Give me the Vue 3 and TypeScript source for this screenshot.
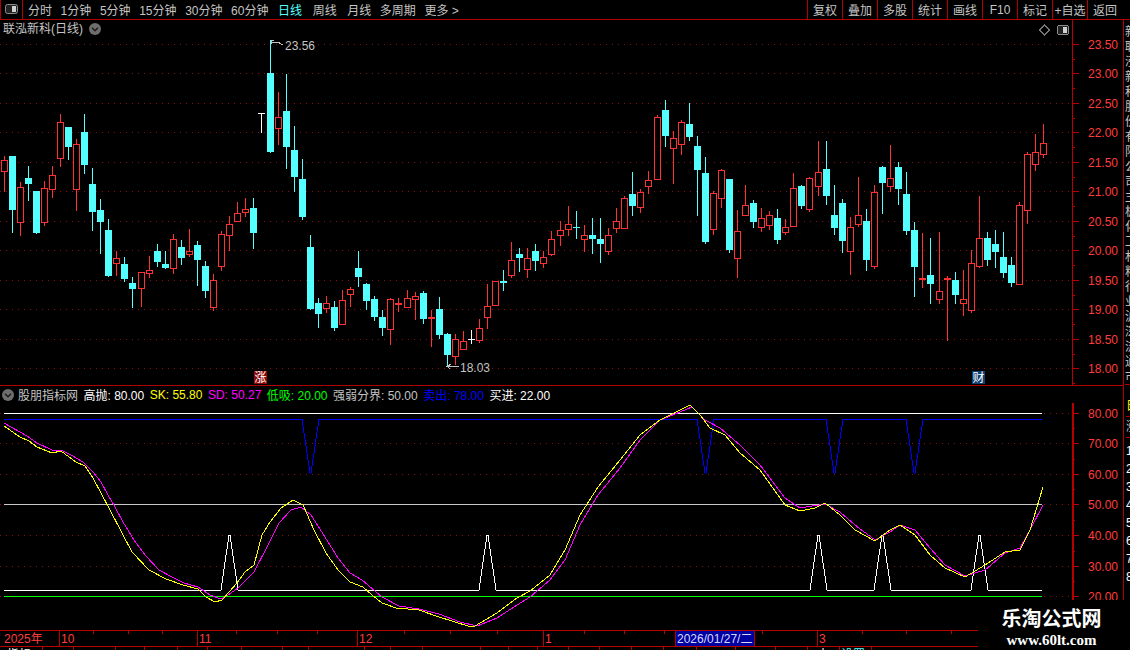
<script setup lang="ts">
// one candle: [x, wick top, body top, body bottom, wick bottom, colour]
type Candle = [number, number, number, number, number, 'r' | 'c' | 'w']

const candles: Candle[] = [
  [4, 156, 160, 171, 191, 'r'], [12, 156, 156, 210, 232, 'c'], [20, 182, 187, 222, 235, 'r'], [28, 166, 178, 184, 200, 'c'],
  [36, 191, 191, 233, 233, 'c'], [44, 181, 188, 222, 225, 'r'], [52, 166, 175, 189, 197, 'r'], [60, 114, 122, 158, 166, 'r'],
  [68, 127, 127, 147, 159, 'c'], [76, 139, 144, 189, 210, 'r'], [84, 114, 132, 165, 173, 'c'], [92, 168, 184, 212, 230, 'c'],
  [100, 199, 210, 222, 253, 'c'], [108, 219, 230, 276, 276, 'c'], [116, 251, 258, 263, 275, 'r'], [124, 257, 264, 279, 281, 'c'],
  [132, 277, 283, 289, 307, 'c'], [141, 272, 272, 288, 306, 'r'], [149, 256, 270, 273, 277, 'r'], [157, 244, 251, 262, 266, 'c'],
  [165, 251, 264, 268, 268, 'c'], [173, 234, 239, 268, 273, 'r'], [181, 240, 247, 258, 264, 'c'], [189, 229, 251, 254, 256, 'r'],
  [197, 241, 245, 260, 285, 'c'], [205, 261, 266, 291, 297, 'c'], [213, 274, 280, 307, 310, 'r'], [221, 231, 234, 266, 270, 'r'],
  [229, 216, 224, 235, 250, 'r'], [237, 202, 213, 221, 221, 'r'], [245, 198, 209, 212, 216, 'r'], [253, 198, 208, 233, 248, 'c'],
  [261, 113, 113, 114, 132, 'w'], [270, 40, 73, 152, 152, 'c'], [278, 92, 117, 128, 144, 'r'], [286, 74, 111, 147, 168, 'c'],
  [294, 126, 150, 177, 191, 'c'], [302, 159, 179, 217, 219, 'c'], [310, 235, 247, 309, 309, 'c'], [318, 298, 303, 314, 327, 'c'],
  [326, 296, 303, 308, 312, 'r'], [334, 301, 307, 328, 330, 'c'], [342, 290, 300, 324, 324, 'r'], [350, 287, 289, 294, 306, 'r'],
  [358, 251, 268, 277, 286, 'c'], [366, 283, 284, 301, 309, 'c'], [374, 296, 299, 317, 320, 'c'], [382, 310, 317, 328, 335, 'c'],
  [390, 298, 299, 329, 344, 'r'], [398, 298, 303, 305, 311, 'r'], [407, 290, 298, 307, 307, 'r'], [415, 292, 296, 299, 319, 'r'],
  [423, 291, 293, 319, 323, 'c'], [431, 310, 317, 319, 346, 'r'], [439, 297, 309, 335, 338, 'c'], [447, 333, 334, 355, 365, 'c'],
  [455, 334, 339, 356, 364, 'r'], [463, 331, 341, 349, 349, 'r'], [471, 330, 339, 340, 343, 'w'], [479, 319, 328, 340, 342, 'r'],
  [487, 284, 306, 317, 328, 'r'], [495, 281, 281, 305, 305, 'r'], [503, 270, 281, 283, 290, 'c'], [511, 242, 260, 275, 277, 'r'],
  [519, 248, 254, 258, 271, 'c'], [527, 248, 258, 269, 277, 'r'], [535, 244, 251, 261, 270, 'c'], [543, 251, 257, 263, 267, 'r'],
  [551, 231, 239, 254, 255, 'r'], [560, 221, 230, 235, 245, 'r'], [568, 206, 224, 229, 235, 'r'], [576, 211, 227, 228, 238, 'c'],
  [584, 225, 235, 239, 251, 'r'], [592, 218, 235, 239, 253, 'c'], [600, 218, 239, 244, 262, 'c'], [608, 228, 235, 251, 254, 'r'],
  [616, 208, 221, 228, 232, 'r'], [624, 196, 198, 228, 228, 'r'], [632, 172, 194, 206, 215, 'c'], [640, 189, 192, 207, 212, 'r'],
  [648, 171, 180, 186, 193, 'r'], [657, 115, 117, 179, 179, 'r'], [665, 100, 110, 136, 146, 'c'], [673, 131, 138, 148, 183, 'r'],
  [681, 120, 122, 144, 154, 'r'], [689, 103, 124, 137, 140, 'c'], [697, 136, 146, 170, 215, 'c'], [705, 157, 173, 242, 243, 'c'],
  [713, 191, 193, 229, 234, 'r'], [721, 169, 170, 198, 207, 'r'], [729, 179, 179, 250, 252, 'c'], [737, 210, 231, 258, 277, 'r'],
  [745, 185, 205, 215, 215, 'r'], [753, 200, 203, 222, 227, 'c'], [761, 208, 218, 227, 231, 'r'], [769, 211, 215, 225, 229, 'r'],
  [777, 209, 218, 240, 243, 'c'], [785, 219, 227, 232, 234, 'r'], [793, 173, 188, 226, 226, 'r'], [801, 185, 186, 206, 208, 'c'],
  [809, 177, 178, 209, 211, 'r'], [818, 141, 172, 186, 195, 'r'], [826, 141, 169, 196, 204, 'c'], [834, 185, 215, 228, 234, 'c'],
  [842, 199, 203, 241, 252, 'c'], [850, 217, 227, 251, 274, 'r'], [858, 177, 215, 224, 226, 'r'], [866, 209, 221, 260, 270, 'c'],
  [874, 185, 192, 266, 268, 'r'], [882, 166, 167, 183, 213, 'c'], [890, 145, 178, 186, 191, 'r'], [898, 162, 167, 189, 204, 'c'],
  [906, 172, 194, 231, 234, 'c'], [914, 222, 230, 267, 296, 'c'], [922, 233, 278, 280, 287, 'r'], [930, 238, 275, 284, 303, 'c'],
  [939, 232, 291, 299, 303, 'r'], [947, 276, 278, 280, 340, 'r'], [955, 272, 280, 295, 303, 'c'], [963, 270, 299, 303, 315, 'r'],
  [971, 250, 263, 310, 312, 'r'], [979, 196, 238, 266, 267, 'r'], [987, 232, 238, 260, 265, 'c'], [995, 230, 244, 252, 267, 'c'],
  [1003, 232, 257, 273, 277, 'c'], [1011, 257, 265, 283, 286, 'c'], [1019, 202, 205, 284, 284, 'r'], [1027, 152, 154, 210, 223, 'r'],
  [1035, 134, 152, 164, 170, 'r'], [1043, 124, 143, 154, 157, 'r']
]

const navItems = ['分时', '1分钟', '5分钟', '15分钟', '30分钟', '60分钟', '日线', '周线', '月线', '多周期', '更多 >']
const tools = ['复权', '叠加', '多股', '统计', '画线', 'F10', '标记', '+自选', '返回']

const legend = [
  { label: '高抛: 80.00', tone: 'white' },
  { label: 'SK: 55.80', tone: 'yellow' },
  { label: 'SD: 50.27', tone: 'magenta' },
  { label: '低吸: 20.00', tone: 'green' },
  { label: '强弱分界: 50.00', tone: 'grey' },
  { label: '卖出: 78.00', tone: 'blue' },
  { label: '买进: 22.00', tone: 'white' }
]

const priceTicks = [
  [44, '23.50'], [73, '23.00'], [103, '22.50'], [132, '22.00'], [162, '21.50'], [191, '21.00'],
  [221, '20.50'], [250, '20.00'], [280, '19.50'], [309, '19.00'], [339, '18.50'], [368, '18.00']
] as [number, string][]

const indicatorTicks = [
  [413, '80.00'], [443, '70.00'], [474, '60.00'], [504, '50.00'], [535, '40.00'], [566, '30.00'], [596, '20.00']
] as [number, string][]

const skLine = '4,426 20,437 29,441 37,447 52,453 61,451 69,457 76,462 85,466 93,478 101,493 110,510 122,533 132,552 149,570 166,579 183,585 198,589 206,597 215,602 222,600 237,583 245,572 254,565 262,535 270,522 281,508 293,500 303,505 314,530 326,553 338,570 350,582 363,587 372,595 382,603 396,608 419,610 439,617 468,626 475,626 497,613 517,598 530,591 550,575 565,550 580,515 598,487 620,460 640,435 660,420 680,410 690,405 700,415 710,428 725,435 740,453 760,470 785,505 800,511 815,508 825,503 840,515 855,530 875,541 890,530 900,525 915,535 930,555 945,568 965,577 985,565 1005,552 1020,550 1030,530 1043,487'
const sdLine = '4,423 27,436 37,443 52,450 63,451 71,455 83,462 93,472 101,482 108,495 115,507 123,522 134,540 145,555 159,570 172,577 184,583 198,587 210,595 221,599 228,595 238,588 254,572 267,547 279,523 291,510 301,507 311,515 325,537 338,558 350,573 362,580 382,597 399,606 419,609 439,614 460,622 477,626 497,618 514,607 530,597 550,580 565,560 580,525 598,495 620,468 640,440 660,420 680,412 692,407 705,420 720,428 740,445 760,465 785,498 800,508 825,504 840,512 855,525 875,540 890,532 900,525 915,530 930,548 945,565 965,576 985,570 1005,553 1020,548 1030,530 1043,505'

// the buy line jumps to 40 and the sell line drops to 60 on these bars
const buyAt = [229, 487, 818, 882, 979]
const sellAt = [310, 705, 834, 914]

function pulseLine(level: number, peak: number, at: number[]) {
  const pts = [`4,${level}`]
  at.forEach((x) => {
    pts.push(`${x - 8},${level}`, `${x},${peak}`, `${x + 1},${peak}`, `${x + 9},${level}`)
  })
  pts.push(`1042,${level}`)
  return pts.join(' ')
}

const buyLine = pulseLine(590, 535, buyAt)
const sellLine = pulseLine(419, 473, sellAt)

const monthMarks = [
  { x: 59, label: '10' }, { x: 197, label: '11' }, { x: 357, label: '12' }, { x: 543, label: '1' }, { x: 817, label: '3' }
]
const axisTicks = [93, 128, 162, 236, 277, 317, 404, 450, 497, 584, 624, 664, 762, 862, 906, 951]
const statusCuts = [42, 73, 115, 144, 177, 207, 241, 282, 308, 364, 390, 422, 480, 508, 537, 568, 599, 631, 663, 696, 735, 775, 807, 839, 871]

const sideNames = ['新', '联', '泓', '新', '科', '股', '份', '有', '限', '公', '司', '主', '板', '化', '工', '材', '料', '行', '业', '沪', '深', '流', '通', '市', '值']
const sideRows = ['1', '2', '3', '4', '5', '6', '7', '8']
</script>

<template>
  <div class="screen">
    <header class="toolbar">
      <div class="layout-toggle">
        <svg width="14" height="11" viewBox="0 0 14 11">
          <rect x="0.5" y="0.5" width="12" height="9" rx="2" fill="#222" stroke="#8c8c8c" />
          <rect x="7" y="2" width="4" height="6" fill="#d0d0d0" />
        </svg>
      </div>
      <nav class="periods">
        <span v-for="item in navItems" :key="item" :class="{ current: item === '日线' }">{{ item }}</span>
      </nav>
      <div class="tools">
        <span v-for="tool in tools" :key="tool" class="tool">{{ tool }}</span>
      </div>
    </header>

    <div class="workspace">
      <div class="charts">
        <section class="pane price-pane">
          <div class="pane-title">
            <span>联泓新科(日线)</span>
            <svg class="drop" width="12" height="12" viewBox="0 0 12 12">
              <circle cx="6" cy="6" r="6" fill="#6e6e6e" />
              <path d="M3 4.8 L6 7.8 L9 4.8" fill="none" stroke="#1c1c1c" stroke-width="1.5" />
            </svg>
          </div>
          <svg class="plot" width="1123" height="365" viewBox="0 20 1123 365">
            <g shape-rendering="crispEdges">
              <line v-for="t in priceTicks" :key="t[1]" class="grid" x1="0" x2="1072" :y1="t[0] + 0.5" :y2="t[0] + 0.5" />
              <g v-for="c in candles" :key="c[0]" :class="['bar', c[5]]">
                <rect class="wick" :x="c[0]" :y="c[1]" width="1" :height="c[4] - c[1] + 1" />
                <rect
                  v-if="c[5] === 'r' && c[3] - c[2] > 2"
                  class="hollow"
                  :x="c[0] - 2.5"
                  :y="c[2] + 0.5"
                  width="6"
                  :height="c[3] - c[2]"
                />
                <rect v-else class="solid" :x="c[0] - 3" :y="c[2]" width="7" :height="c[3] - c[2]" />
              </g>
              <rect class="red-line" x="1072" y="20" width="1" height="365" />
              <g v-for="t in priceTicks" :key="'p' + t[1]">
                <rect class="red-line" x="1072" :y="t[0]" width="7" height="1" />
                <rect class="red-line" x="1072" :y="t[0] + 15" width="3" height="1" />
              </g>
              <path class="note-line" d="M271 44 V40 H274 M272 42 H278 L281 44 H283 M451 364 L448 366 H459 M448 367 L450 369" />
              <path d="M1044.5 25 L1049.5 30 L1044.5 35 L1039.5 30 Z" fill="none" stroke="#777" />
              <rect x="1057.5" y="25.5" width="11" height="9" rx="2" fill="#222" stroke="#8c8c8c" />
              <rect x="1063" y="27" width="4" height="6" fill="#d0d0d0" />
            </g>
            <text class="note" x="285" y="50">23.56</text>
            <text class="note" x="460" y="372">18.03</text>
            <text v-for="t in priceTicks" :key="'l' + t[1]" class="axis-label" x="1088" :y="t[0] + 5">{{ t[1] }}</text>
            <rect x="254" y="371" width="13" height="13" fill="#8c0a0a" />
            <text class="flag" x="254.5" y="382">涨</text>
            <rect x="972" y="371" width="13" height="13" fill="#0f3f70" />
            <text class="flag" x="972.5" y="382">财</text>
          </svg>
        </section>

        <section class="pane indicator-pane">
          <div class="legend">
            <svg class="drop" width="12" height="12" viewBox="0 0 12 12">
              <circle cx="6" cy="6" r="6" fill="#6e6e6e" />
              <path d="M3 4.8 L6 7.8 L9 4.8" fill="none" stroke="#1c1c1c" stroke-width="1.5" />
            </svg>
            <span class="legend-name">股朋指标网</span>
            <span v-for="item in legend" :key="item.label" :class="item.tone">{{ item.label }}</span>
          </div>
          <svg class="plot" width="1123" height="227" viewBox="0 403 1123 227">
            <g shape-rendering="crispEdges">
              <line v-for="t in indicatorTicks" :key="t[1]" class="grid" x1="0" x2="1072" :y1="t[0] + 0.5" :y2="t[0] + 0.5" />
              <line class="level high" x1="4" x2="1042" y1="413.5" y2="413.5" />
              <line class="level mid" x1="4" x2="1042" y1="504.5" y2="504.5" />
              <line class="level low" x1="4" x2="1042" y1="596.5" y2="596.5" />
              <polyline class="trace sell" :points="sellLine" />
              <polyline class="trace buy" :points="buyLine" />
              <polyline class="trace sd" :points="sdLine" />
              <polyline class="trace sk" :points="skLine" />
              <rect class="red-line" x="1072" y="403" width="2" height="227" />
              <g v-for="t in indicatorTicks" :key="'p' + t[1]">
                <rect class="red-line" x="1072" :y="t[0]" width="7" height="1" />
                <rect class="red-line" x="1072" :y="t[0] - 15" width="3" height="1" />
              </g>
            </g>
            <text v-for="t in indicatorTicks" :key="'l' + t[1]" class="axis-label" x="1088" :y="t[0] + 5">{{ t[1] }}</text>
          </svg>
        </section>

        <svg class="time-axis" width="1123" height="17" viewBox="0 630 1123 17">
          <g shape-rendering="crispEdges">
            <rect class="red-line" x="0" y="630" width="1123" height="1" />
            <rect class="red-line" x="0" y="646" width="1123" height="1" />
            <rect v-for="x in axisTicks" :key="x" class="red-line" :x="x" y="631" width="1" height="3" />
            <rect v-for="m in monthMarks" :key="m.x" class="red-line" :x="m.x" y="631" width="1" height="15" />
            <rect x="676" y="631" width="78" height="15" fill="#0000a0" />
            <rect class="red-line" x="675" y="631" width="1" height="15" />
            <rect class="red-line" x="754" y="631" width="1" height="15" />
          </g>
          <text class="axis-label" x="4" y="643">2025年</text>
          <text v-for="m in monthMarks" :key="m.label" class="axis-label" :x="m.x + 2" y="643">{{ m.label }}</text>
          <text class="date-label" x="677" y="643">2026/01/27/二</text>
        </svg>

        <svg class="status-row" width="1123" height="3" viewBox="0 647 1123 3">
          <g shape-rendering="crispEdges">
            <rect v-for="x in statusCuts" :key="x" class="red-line" :x="x" y="647" width="1" height="3" />
          </g>
          <text class="status-text" x="7" y="659">指标</text>
          <text class="status-text" x="48" y="659">+</text>
          <text class="status-text" x="817" y="659">大</text>
          <text class="status-text current" x="841" y="659">设置</text>
        </svg>
      </div>

      <aside class="side">
        <div class="side-names">
          <div v-for="(name, i) in sideNames" :key="i">{{ name }}</div>
        </div>
        <div class="side-quote">
          <div class="side-box">日</div>
          <div class="side-box">涨</div>
          <div class="side-rows">
            <div v-for="row in sideRows" :key="row">{{ row }}</div>
          </div>
        </div>
      </aside>
    </div>

    <div class="watermark">
      <strong>乐淘公式网</strong>
      <span>www.60lt.com</span>
    </div>
  </div>
</template>

<style>
html,
body {
  margin: 0;
  background: #000;
  overflow: hidden;
}
</style>

<style scoped>
.screen {
  position: relative;
  width: 1130px;
  height: 650px;
  overflow: hidden;
  background: #000;
  color: #c4c4c4;
  font-family: "Liberation Sans", "Noto Sans CJK SC", sans-serif;
  font-size: 12px;
}

.toolbar {
  display: flex;
  align-items: stretch;
  height: 20px;
  box-sizing: border-box;
  border-bottom: 1px solid #b00000;
}

.layout-toggle {
  display: flex;
  align-items: center;
  justify-content: center;
  width: 23px;
  box-sizing: border-box;
  padding-left: 1px;
  border-left: 1px solid #b00000;
  border-right: 1px solid #b00000;
}

.periods {
  display: flex;
  align-items: center;
  gap: 8.6px;
  padding-left: 5px;
}

.periods .current {
  color: #55ffff;
}

.periods span:nth-child(7) {
  margin-left: 1px;
}

.periods span:nth-child(8),
.periods span:nth-child(9) {
  margin-left: 2px;
}

.tools {
  display: flex;
  margin-left: auto;
  margin-right: 8px;
}

.tool {
  display: flex;
  align-items: center;
  justify-content: center;
  width: 35px;
  box-sizing: border-box;
  border-left: 1px solid #b00000;
}

.workspace {
  display: flex;
  height: 630px;
}

.charts {
  display: flex;
  flex-direction: column;
  width: 1123px;
}

.pane {
  position: relative;
}

.price-pane {
  height: 366px;
  box-sizing: border-box;
  border-bottom: 1px solid #b00000;
}

.pane-title {
  position: absolute;
  top: 3px;
  left: 3px;
  display: flex;
  align-items: center;
  gap: 6px;
  line-height: 12px;
}

.plot,
.time-axis,
.status-row {
  display: block;
}

.grid {
  stroke: #8a1010;
  stroke-width: 1;
  stroke-dasharray: 1 5;
}

.bar.r .wick,
.bar.r .solid {
  fill: #ff3232;
}

.bar.c .wick,
.bar.c .solid {
  fill: #54ffff;
}

.bar.w .wick,
.bar.w .solid {
  fill: #fff;
}

.hollow {
  fill: #000;
  stroke: #ff3232;
  stroke-width: 1;
}

.red-line {
  fill: #b80000;
}

.note-line {
  fill: none;
  stroke: #c4c4c4;
}

.note {
  fill: #c4c4c4;
  font-size: 12px;
}

.axis-label {
  fill: #ff3c3c;
  font-size: 12px;
}

.flag {
  fill: #fff;
  font-size: 12px;
}

.indicator-pane {
  height: 244px;
}

.legend {
  display: flex;
  align-items: center;
  gap: 5.5px;
  height: 17px;
  padding-left: 2px;
}

.legend-name {
  margin-left: -1.5px;
  margin-right: 0;
}

.legend .white { color: #fff; }
.legend .yellow { color: #ffff00; }
.legend .magenta { color: #ff00ff; }
.legend .green { color: #00ff00; }
.legend .grey { color: #c4c4c4; }
.legend .blue { color: #0000ff; }

.level {
  stroke-width: 1;
}

.level.high { stroke: #fff; }
.level.mid { stroke: #c8c8c8; }
.level.low { stroke: #00ff00; }

.trace {
  fill: none;
  stroke-width: 1;
}

.trace.sell { stroke: #0000ff; }
.trace.buy { stroke: #fff; }
.trace.sd { stroke: #ff00ff; }
.trace.sk { stroke: #ffff00; }

.date-label {
  fill: #d8d8ff;
  font-size: 12px;
}

.status-text {
  fill: #fff;
  font-size: 12px;
}

.status-text.current {
  fill: #55ffff;
}

.side {
  width: 7px;
  overflow: hidden;
  box-sizing: border-box;
  padding-left: 1px;
  border-left: 1px solid #b00000;
}

.side-names {
  height: 365px;
  padding-top: 5px;
  box-sizing: border-box;
  overflow: hidden;
  white-space: nowrap;
  line-height: 15px;
  border-bottom: 1px solid #b00000;
}

.side-quote {
  margin-left: -2px;
  padding-left: 2px;
  border-left: 1px solid #b00000;
}

.side-box {
  height: 20px;
  line-height: 20px;
  white-space: nowrap;
  border-bottom: 1px solid #b00000;
}

.side-box:first-child {
  margin-top: 11px;
  color: #ffff00;
}

.side-rows {
  padding-top: 4px;
  line-height: 18px;
  color: #fff;
}

.watermark {
  position: absolute;
  top: 600px;
  left: 978px;
  right: 0;
  bottom: 0;
  display: flex;
  flex-direction: column;
  align-items: center;
  padding-right: 5px;
  box-sizing: border-box;
  background: #000;
  color: #fff;
  font-family: "Liberation Serif", "Noto Sans CJK SC", serif;
}

.watermark strong {
  margin-top: 7px;
  font-size: 20px;
  line-height: 24px;
}

.watermark span {
  margin-top: 1px;
  font-size: 15px;
  font-weight: 700;
  line-height: 16px;
}
</style>
